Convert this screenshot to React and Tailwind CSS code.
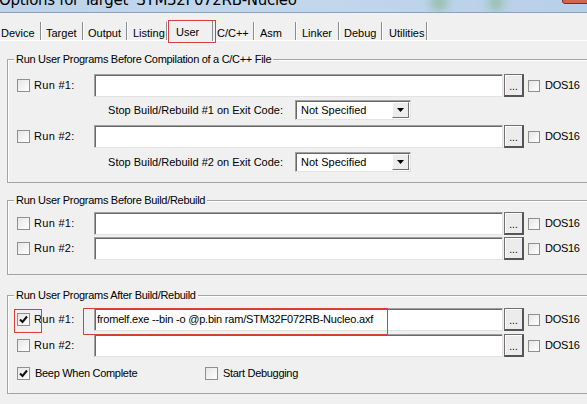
import React from "react";

const TABS = [
    { label: "Device", w: 41, pad: 1 },
    { label: "Target", w: 42, pad: 5 },
    { label: "Output", w: 44, pad: 5 },
    { label: "Listing", w: 40, pad: 6 },
    { label: "User", w: 46, pad: 8, active: true },
    { label: "C/C++", w: 41, pad: 4 },
    { label: "Asm", w: 42, pad: 6 },
    { label: "Linker", w: 43, pad: 6 },
    { label: "Debug", w: 43, pad: 5 },
    { label: "Utilities", w: 45, pad: 7 },
];

function CheckBox({ checked, small }) {
    return (
        <div className={`${small ? "w-[12px] h-[12px]" : "w-[13px] h-[13px]"} shrink-0 border border-[#8e8f8f] bg-gradient-to-br from-[#e6e6e6] to-white flex items-center justify-center`}>
            {checked && (
                <svg width="9" height="9" viewBox="0 0 9 9">
                    <path d="M1 4.5 L3.5 7 L8 1.5" fill="none" stroke="#111" strokeWidth="2" />
                </svg>
            )}
        </div>
    );
}

function PathField({ value }) {
    return (
        <div className="w-[409px] h-[23px] shrink-0 bg-white border border-[#a0a0a0] border-b-[#e3e3e3] border-r-[#e3e3e3] shadow-[inset_1px_1px_0_#696969] flex items-center pl-[2px] overflow-hidden whitespace-nowrap tracking-[-0.2px]">
            {value}
        </div>
    );
}

function BrowseButton() {
    return (
        <div className="w-[20px] h-[23px] shrink-0 ml-[1px] bg-[#ececec] border border-[#707070] border-r-2 border-b-2 border-r-[#555] border-b-[#555] shadow-[inset_1px_1px_0_#fff] flex items-end justify-center pb-[3px] leading-none text-[10px]">
            ...
        </div>
    );
}

function ExitCodeRow({ n }) {
    return (
        <div className="flex items-center h-[20px]">
            <span className="w-[287px] text-right pr-[12px] whitespace-nowrap">
                Stop Build/Rebuild #{n} on Exit Code:
            </span>
            <div className="w-[116px] h-[20px] bg-white border border-[#a0a0a0] border-b-[#e3e3e3] border-r-[#e3e3e3] shadow-[inset_1px_1px_0_#696969] flex items-center">
                <span className="flex-1 pl-[5px] whitespace-nowrap">Not Specified</span>
                <div className="w-[17px] h-[16px] mr-[1px] bg-[#ececec] border border-[#fff] border-r-[#707070] border-b-[#707070] flex items-center justify-center">
                    <svg width="7" height="4" viewBox="0 0 7 4">
                        <path d="M0 0 H7 L3.5 4 Z" fill="#000" />
                    </svg>
                </div>
            </div>
        </div>
    );
}

function RunRow({ n, value, checked }) {
    return (
        <div className="flex items-center h-[23px]">
            <div className="ml-[9px]">
                <CheckBox checked={checked} />
            </div>
            <span className="ml-[4px] w-[60px] whitespace-nowrap tracking-[0.3px]">Run #{n}:</span>
            <PathField value={value} />
            <BrowseButton />
            <div className="ml-[4px]">
                <CheckBox small />
            </div>
            <span className="ml-[5px] tracking-[-0.3px]">DOS16</span>
        </div>
    );
}

function Group({ title, className, children }) {
    return (
        <div className={`relative w-[590px] border border-[#a5a5a5] shadow-[inset_1px_1px_0_#fff] ${className}`}>
            <span className="absolute -top-[8px] left-[6px] px-[2px] bg-[#f0f0f0] leading-[14px] whitespace-nowrap tracking-[-0.3px]">
                {title}
            </span>
            {children}
        </div>
    );
}

export default function App() {
    return (
        <div className="relative w-[587px] h-[404px] overflow-hidden bg-[#f0f0f0] text-[11px] text-black font-['Liberation_Sans',Arial,sans-serif]">
            {/* window caption, mostly scrolled off the top */}
            <div className="relative h-[13px] bg-gradient-to-r from-[#bcd3ea] via-[#c3d7ec] to-[#b7cfe8] border-b border-[#8aa2bd] overflow-hidden">
                <div className="-mt-[9px] ml-[-1px] text-[15px] leading-[18px] whitespace-nowrap font-['DejaVu_Sans',sans-serif] tracking-[-0.3px]">
                    Options for Target 'STM32F072RB-Nucleo'
                </div>
                <div className="absolute top-[-4px] left-[430px] w-[18px] h-[14px] rounded-full bg-[#7fb68c] blur-[5px] opacity-70" />
                <div className="absolute top-[-4px] left-[488px] w-[16px] h-[14px] rounded-full bg-[#7fb68c] blur-[5px] opacity-70" />
                <div className="absolute top-[-6px] left-[562px] w-[30px] h-[10px] rounded-[3px] bg-[#d0684f] border border-[#7a3020]" />
            </div>

            {/* tab strip */}
            <div className="relative flex items-end h-[28px] border-b border-white">
                {TABS.map((tab) =>
                    tab.active ? (
                        <div
                            key={tab.label}
                            className="relative z-10 -mb-[1px] h-[21px] bg-[#f0f0f0] border-l border-t border-white border-r border-r-[#8c8c8c] pt-[3px] whitespace-nowrap"
                            style={{ width: tab.w, paddingLeft: tab.pad }}
                        >
                            {tab.label}
                        </div>
                    ) : (
                        <div
                            key={tab.label}
                            className="h-[18px] border-r border-[#8c8c8c] shadow-[1px_0_0_#fff] pt-[3px] whitespace-nowrap"
                            style={{ width: tab.w, paddingLeft: tab.pad }}
                        >
                            {tab.label}
                        </div>
                    )
                )}
            </div>

            <div className="pl-[7px]">
                <Group title="Run User Programs Before Compilation of a C/C++ File" className="mt-[18px] pt-[14px] pb-[10px]">
                    <RunRow n={1} />
                    <div className="mt-[3px]">
                        <ExitCodeRow n={1} />
                    </div>
                    <div className="mt-[5px]">
                        <RunRow n={2} />
                    </div>
                    <div className="mt-[4px]">
                        <ExitCodeRow n={2} />
                    </div>
                </Group>

                <Group title="Run User Programs Before Build/Rebuild" className="mt-[17px] pt-[11px] pb-[14px]">
                    <RunRow n={1} />
                    <div className="mt-[2px]">
                        <RunRow n={2} />
                    </div>
                </Group>

                <Group title="Run User Programs After Build/Rebuild" className="mt-[20px] pt-[12px] pb-[12px]">
                    <RunRow n={1} checked value="fromelf.exe --bin -o @p.bin ram/STM32F072RB-Nucleo.axf" />
                    <div className="mt-[3px]">
                        <RunRow n={2} />
                    </div>
                    <div className="mt-[8px] flex items-center h-[16px] tracking-[-0.3px]">
                        <div className="ml-[9px]">
                            <CheckBox checked />
                        </div>
                        <span className="ml-[5px] w-[170px]">Beep When Complete</span>
                        <CheckBox />
                        <span className="ml-[5px]">Start Debugging</span>
                    </div>
                </Group>
            </div>

            {/* red highlight frames */}
            <div className="absolute left-[168px] top-[20px] w-[48px] h-[23px] border border-[#d8403a] z-20" />
            <div className="absolute left-[14px] top-[309px] w-[28px] h-[24px] border border-[#d8403a]" />
            <div className="absolute left-[83px] top-[308px] w-[305px] h-[27px] border border-[#d8403a]" />
        </div>
    );
}
